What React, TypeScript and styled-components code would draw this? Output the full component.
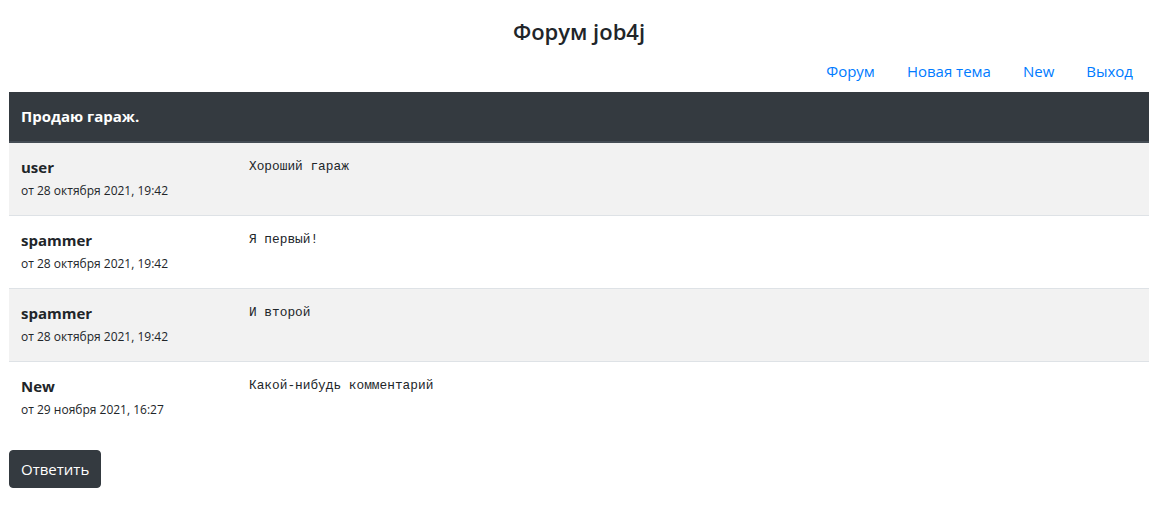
import * as React from "react";
import styled, {createGlobalStyle} from "styled-components";

const GlobalStyle = createGlobalStyle`
  body {
    margin: 0;
    background: #fff;
    color: #212529;
    font-family: "Open Sans", "Noto Sans", sans-serif;
    font-size: 16px;
    line-height: 1.5;
  }
`

const Page = styled.div`
  width: 1140px;
  padding: 0 18px 0 9px;
`

const Title = styled.h4`
  margin: 0;
  padding-top: 15px;
  height: 33px;
  text-align: center;
  font-size: 22px;
  font-weight: 600;
  line-height: 33px;
`

const Nav = styled.nav`
  display: flex;
  justify-content: flex-end;
  height: 41px;
  align-items: center;
  padding-top: 3px;
`

const NavLink = styled.a`
  padding: 0 16px;
  color: #007bff;
  font-size: 15px;
  text-decoration: none;
`

const Table = styled.table`
  width: 100%;
  border-collapse: collapse;
  margin-bottom: 16px;
`

const HeadCell = styled.th`
  background: #343a40;
  color: #fff;
  text-align: left;
  padding: 12px;
  font-size: 15px;
  font-weight: 700;
  border-bottom: 2px solid #454d55;
  line-height: 25px;
`

const Row = styled.tr<{ $striped: boolean }>`
  background: ${p => p.$striped ? "#f2f2f2" : "#fff"};
  border-top: 1px solid #dee2e6;
`

const Cell = styled.td<{ $w?: string }>`
  padding: 12px;
  vertical-align: top;
  width: ${p => p.$w || "auto"};
`

const Author = styled.div`
  font-weight: 700;
  font-size: 15px;
  line-height: 24px;
`

const When = styled.div`
  font-size: 12px;
  line-height: 24px;
`

const Text = styled.pre`
  margin: 0;
  font-family: "Liberation Mono", "DejaVu Sans Mono", monospace;
  font-size: 12.8px;
  line-height: 24px;
  color: #212529;
`

const Button = styled.button`
  background: #343a40;
  color: #fff;
  border: 1px solid #343a40;
  border-radius: 4px;
  padding: 6px 11px;
  font-family: inherit;
  font-size: 15px;
  line-height: 24px;
  cursor: pointer;
`

const comments = [
    {user: "user", date: "от 28 октября 2021, 19:42", text: "Хороший гараж"},
    {user: "spammer", date: "от 28 октября 2021, 19:42", text: "Я первый!"},
    {user: "spammer", date: "от 28 октября 2021, 19:42", text: "И второй"},
    {user: "New", date: "от 29 ноября 2021, 16:27", text: "Какой-нибудь комментарий"},
]

function App() {
    return (
        <Page>
            <GlobalStyle/>
            <Title>Форум job4j</Title>
            <Nav>
                <NavLink href="#">Форум</NavLink>
                <NavLink href="#">Новая тема</NavLink>
                <NavLink href="#">New</NavLink>
                <NavLink href="#">Выход</NavLink>
            </Nav>
            <Table>
                <thead>
                <tr>
                    <HeadCell colSpan={2}>Продаю гараж.</HeadCell>
                </tr>
                </thead>
                <tbody>
                {comments.map((c, i) => (
                    <Row key={i} $striped={i % 2 === 0}>
                        <Cell $w="20%">
                            <Author>{c.user}</Author>
                            <When>{c.date}</When>
                        </Cell>
                        <Cell>
                            <Text>{c.text}</Text>
                        </Cell>
                    </Row>
                ))}
                </tbody>
            </Table>
            <Button>Ответить</Button>
        </Page>
    );
}

export default App;
